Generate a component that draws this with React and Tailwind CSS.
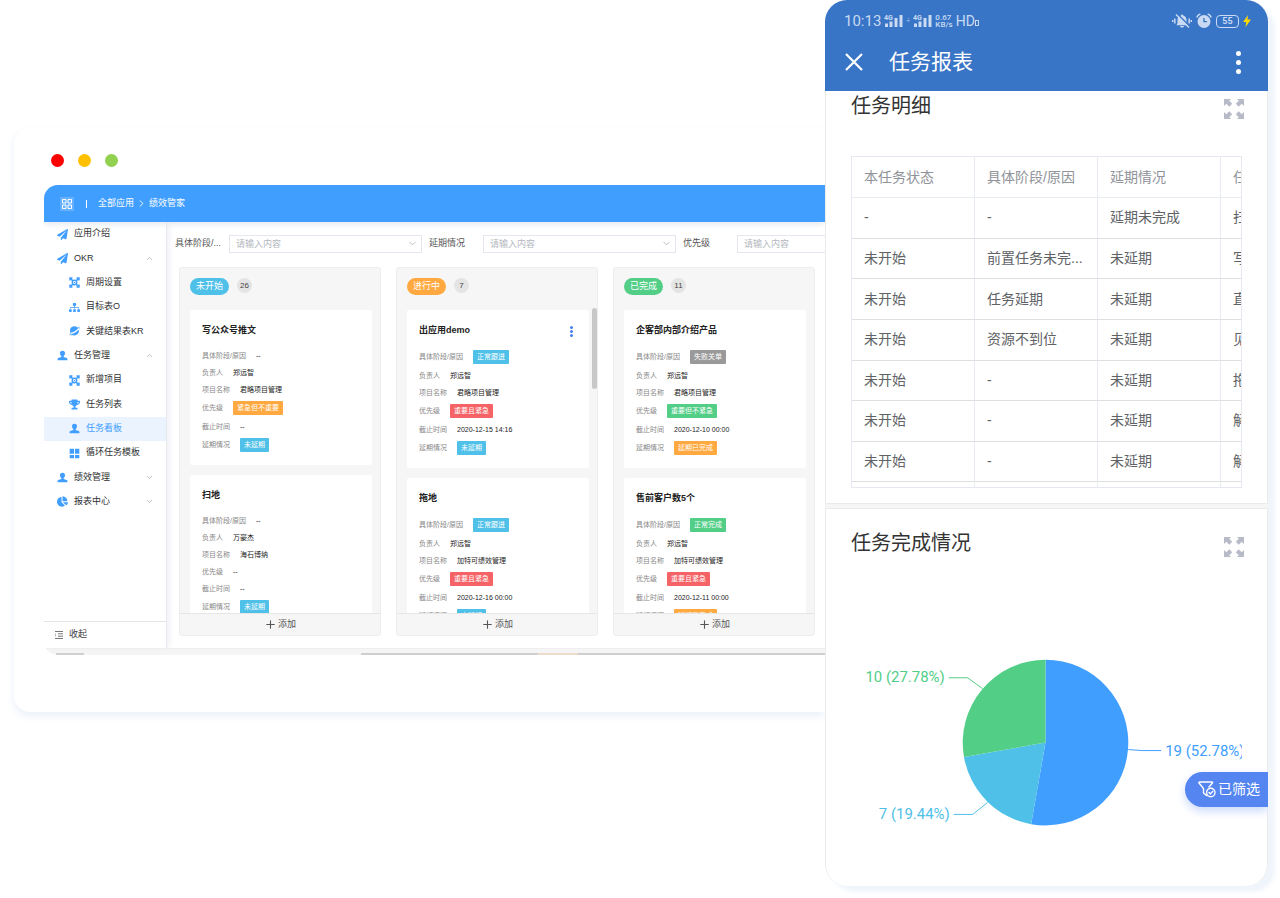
import { ChevronDown, ChevronRight, ChevronUp, Plus } from "lucide-react";
import { FaChartPie, FaPaperPlane, FaSitemap, FaTrophy } from "react-icons/fa";
import clsx from "clsx";

const PersonIcon = () => (
  <svg viewBox="0 0 16 16" className="size-[11px]" fill="currentColor">
    <path d="M8 1a3.6 3.6 0 0 1 3.6 3.8c0 1.8-.9 3.3-1.9 4.1v1.3l4.4 1.3c.7.2 1.1.8 1.1 1.5v2H.8v-2c0-.7.4-1.3 1.1-1.5l4.4-1.3V8.900C5.300 8.100 4.400 6.600 4.400 4.800A3.600 3.600 0 0 1 8 1z" />
  </svg>
);

const LinkIcon = () => (
  <svg viewBox="0 0 16 16" className="size-[11px]" fill="none" stroke="currentColor" strokeWidth="2.200">
    <path d="M1.500 5V1.500H5M11 1.500h3.500V5M14.500 11v3.500H11M5 14.500H1.500V11M2 2l3.500 3.500M14 2l-3.500 3.500M14 14l-3.500-3.500M2 14l3.500-3.500" />
    <circle cx="8" cy="8" r="3.200" />
    <circle cx="8" cy="8" r="1" fill="currentColor" stroke="none" />
  </svg>
);

const PlanetIcon = () => (
  <svg viewBox="0 0 16 16" className="size-3" fill="currentColor">
    <path d="M1.500 8.500A6.500 6.500 0 0 1 13.300 4C10.500 7.500 6.500 10 2 10.600 1.600 10 1.500 9.200 1.500 8.500z" />
    <path d="M3 12.200c4.300-.6 8-2.800 11-6.400A6.500 6.500 0 0 1 3 12.200z" />
    <path d="M12.500 2.800c2-.6 3 .1 2.300 1.900M2.700 10.700C.9 12.900.8 14.300 4.500 13.300" fill="none" stroke="currentColor" strokeWidth="1.200" />
  </svg>
);

const BlocksIcon = () => (
  <svg viewBox="0 0 16 16" className="size-[11px]" fill="currentColor">
    <path d="M1 1h6.300v7.500H1zM8.700 1H15v7.500H8.700zM1 10h6.300v5H1zM8.700 10H15v5H8.700z" />
  </svg>
);

const ExpandIcon = () => (
  <svg viewBox="0 0 20 20" className="size-5" fill="#b7bac7">
    <path d="M0 0h7L5.200 1.800l3 3-2.900 2.900-3-3L0 7zM20 0h-7l1.800 1.800-3 3 2.900 2.900 3-3L20 7zM0 20h7l-1.800-1.800 3-3-2.900-2.900-3 3L0 13zM20 20h-7l1.800-1.800-3-3 2.900-2.900 3 3L20 13z" />
  </svg>
);

const SignalIcon = () => (
  <svg viewBox="0 0 19 14" className="h-[14px] w-[19px]" fill="currentColor">
    <text x="0" y="6" fontSize="7" fontWeight="700" fontFamily="Roboto, sans-serif">4G</text>
    <path d="M1 9.500h3V13H1zM5.500 7.500h3V13h-3zM10.500 4h3v9h-3zM15.500 1h3v12h-3z" />
  </svg>
);

const MuteIcon = () => (
  <svg viewBox="0 0 20 16" className="h-4 w-5" fill="currentColor">
    <path d="M5.500 6.500A4.500 4.500 0 0 1 9 2.600c.3-1.500 2-1.500 2.300 0C13.500 3.400 14.500 5 14.500 7v3l1.500 2.200H4.500L5.500 10z" />
    <path d="M8 13h4c-.3 2-3.700 2-4 0z" />
    <path d="M5.500 1l13 13" stroke="#3875c6" strokeWidth="1.500" />
    <path d="M4 1.500l13 13M2.800 5.500v5M17.200 5.500v5M.7 7v2M19.300 7v2" stroke="currentColor" strokeWidth="1.500" />
  </svg>
);

const AlarmIcon = () => (
  <svg viewBox="0 0 16 16" className="size-4" fill="currentColor">
    <path d="M8 2a6.500 6.500 0 1 0 0 13A6.500 6.500 0 0 0 8 2zm.6 7.200H7.300V5h1.300v3l2.300.1v1.100z" fillRule="evenodd" />
    <path d="M.8 4.500C1.300 2.800 2.600 1.500 4.300 1M15.200 4.500C14.700 2.800 13.400 1.500 11.700 1" fill="none" stroke="currentColor" strokeWidth="1.600" />
  </svg>
);

const FilterIcon = () => (
  <svg viewBox="0 0 18 17" className="h-[17px] w-[18px]" fill="none" stroke="white" strokeWidth="1.400" strokeLinejoin="round" strokeLinecap="round">
    <path d="M8.500 14.500L5.500 12V7.500L1 2c-.3-.6 0-1 .6-1h12.300c.7 0 .9.500.5 1L11 6" />
    <circle cx="12.800" cy="11.500" r="4.200" />
    <path d="M11 11.500l1.400 1.400 2.400-2.600" />
  </svg>
);

const menu = [
  { label: "应用介绍", icon: FaPaperPlane },
  { label: "OKR", icon: FaPaperPlane, open: true },
  { label: "周期设置", icon: LinkIcon, child: true },
  { label: "目标表O", icon: FaSitemap, child: true },
  { label: "关键结果表KR", icon: PlanetIcon, child: true },
  { label: "任务管理", icon: PersonIcon, open: true },
  { label: "新增项目", icon: LinkIcon, child: true },
  { label: "任务列表", icon: FaTrophy, child: true },
  { label: "任务看板", icon: PersonIcon, child: true, active: true },
  { label: "循环任务模板", icon: BlocksIcon, child: true },
  { label: "绩效管理", icon: PersonIcon, open: false },
  { label: "报表中心", icon: FaChartPie, open: false },
];

const filters = ["具体阶段/...", "延期情况", "优先级"];

const tagColors = {
  blue: "bg-[#4fc0e8]",
  orange: "bg-[#ffa940]",
  red: "bg-[#f56367]",
  green: "bg-[#52ce87]",
  gray: "bg-[#999999]",
};

const makeTask = (title, stage, owner, project, priority, deadline, delay) => ({
  title,
  fields: [
    ["具体阶段/原因", ...stage],
    ["负责人", owner],
    ["项目名称", project],
    ["优先级", ...priority],
    ["截止时间", deadline],
    ["延期情况", ...delay],
  ],
});

const columns = [
  {
    name: "未开始",
    count: 26,
    color: "blue",
    tasks: [
      makeTask("写公众号推文", ["--"], "郑远智", "君略项目管理", ["紧急但不重要", "orange"], "--", ["未延期", "blue"]),
      makeTask("扫地", ["--"], "万豪杰", "海石博纳", ["--"], "--", ["未延期", "blue"]),
    ],
  },
  {
    name: "进行中",
    count: 7,
    color: "orange",
    scroll: true,
    tasks: [
      makeTask("出应用demo", ["正常跟进", "blue"], "郑远智", "君略项目管理", ["重要且紧急", "red"], "2020-12-15 14:16", ["未延期", "blue"]),
      makeTask("拖地", ["正常跟进", "blue"], "郑远智", "加特可绩效管理", ["重要且紧急", "red"], "2020-12-16 00:00", ["未延期", "blue"]),
    ],
  },
  {
    name: "已完成",
    count: 11,
    color: "green",
    tasks: [
      makeTask("企客部内部介绍产品", ["失败关单", "gray"], "郑远智", "君略项目管理", ["重要但不紧急", "green"], "2020-12-10 00:00", ["延期已完成", "orange"]),
      makeTask("售前客户数5个", ["正常完成", "green"], "郑远智", "加特可绩效管理", ["重要且紧急", "red"], "2020-12-11 00:00", ["延期已完成", "orange"]),
    ],
  },
];

const reportHead = ["本任务状态", "具体阶段/原因", "延期情况", "任务名称"];
const reportRows = [
  ["-", "-", "延期未完成", "扫地"],
  ["未开始", "前置任务未完...", "未延期", "写公众号推文"],
  ["未开始", "任务延期", "未延期", "直播"],
  ["未开始", "资源不到位", "未延期", "见客户"],
  ["未开始", "-", "未延期", "拖地"],
  ["未开始", "-", "未延期", "解决问题"],
  ["未开始", "-", "未延期", "解决问题"],
  ["", "", "", ""],
];

const slices = [
  { value: 19, text: "19 (52.78%)", color: "#409eff", x: 315, y: 165, anchor: "start", line: "278,159 292,160 311,160" },
  { value: 7, text: "7 (19.44%)", color: "#4fc0e8", x: 99, y: 229, anchor: "end", line: "137,212 122,224 103,224" },
  { value: 10, text: "10 (27.78%)", color: "#52ce87", x: 94, y: 91, anchor: "end", line: "132,98 117,87 98,87" },
];

function TopBar() {
  return (
    <header className="relative z-10 flex h-[37px] items-center bg-[#409eff] pl-4 text-[9px] text-white shadow-[0_2px_6px_#e4e7ed]">
      <button type="button" aria-label="应用" className="flex size-[14px] items-center justify-center bg-white/20">
        <svg viewBox="0 0 10 10" className="size-[10px]" fill="none" stroke="white" strokeWidth="1">
          <path d="M.5.5h3.500v3.500H.5zM6 .5h3.500v3.500H6zM.5 6h3.500v3.500H.5zM6 6h3.500v3.500H6z" />
        </svg>
      </button>
      <span className="ml-3 h-2 w-px bg-white" />
      <nav className="ml-[11px] flex items-center gap-[2px]">
        <a href="#apps">全部应用</a>
        <ChevronRight size={11} />
        <a href="#performance">绩效管家</a>
      </nav>
    </header>
  );
}

function Sidebar() {
  return (
    <aside className="relative flex w-[123px] shrink-0 flex-col border-r border-[#e6e8ee] bg-white shadow-[2px_0_6px_#eef0f4]">
      <ul className="grid h-[292px] auto-rows-fr">
        {menu.map(({ label, icon: Icon, child, active, open }) => (
          <li key={label} className={clsx(active && "bg-[#ebf3ff]")}>
            <a
              href="#menu"
              className={clsx("flex h-full items-center gap-[6px] pr-3 text-[9px]", child ? "pl-[25px]" : "pl-[13px]", active ? "text-[#409eff]" : "text-[#303133]")}
            >
              <span className="flex w-[11px] justify-center text-[11px] text-[#409eff]">
                <Icon />
              </span>
              {label}
              {open === true && <ChevronUp size={9} className="ml-auto text-[#a8abb2]" />}
              {open === false && <ChevronDown size={9} className="ml-auto text-[#a8abb2]" />}
            </a>
          </li>
        ))}
      </ul>
      <button type="button" className="mt-auto flex h-[27px] items-center gap-[6px] border-t border-[#e4e4e4] pl-[11px] text-[9px] text-[#444]">
        <svg viewBox="0 0 8 8" className="size-2" stroke="#777" strokeWidth="1">
          <path d="M0 .5h8M3 2.800h5M3 5.200h5M0 7.500h8M0 2.500v3" />
        </svg>
        收起
      </button>
    </aside>
  );
}

function Filters() {
  return (
    <div className="flex h-[18px] gap-[7px] overflow-hidden pl-2">
      {filters.map((name, i) => (
        <div key={name} className="flex shrink-0 items-center">
          <label htmlFor={`filter-${i}`} className="w-[54px] text-[9px] text-[#555]">
            {name}
          </label>
          <div className="relative h-[18px] w-[193px]">
            <select
              id={`filter-${i}`}
              className="block h-[18px] w-full appearance-none border border-[#e4e7ed] bg-white pl-[6px] text-[9px] leading-4 text-[#b4b8c0]"
            >
              <option>请输入内容</option>
            </select>
            <ChevronDown size={11} className="pointer-events-none absolute top-[3px] right-1 text-[#b4b8c0]" />
          </div>
        </div>
      ))}
    </div>
  );
}

function TaskCard({ task, showMore }) {
  return (
    <article className="relative shrink-0 rounded-[2px] bg-white pb-[10px] pl-3">
      <h3 className="h-[37px] pt-[13px] text-[9px] leading-[14px] font-bold text-[#222]">{task.title}</h3>
      {showMore && (
        <button type="button" aria-label="更多" className="absolute top-4 right-4 flex flex-col gap-px">
          <span className="size-[3px] rounded-full bg-[#4a80f0]" />
          <span className="size-[3px] rounded-full bg-[#4a80f0]" />
          <span className="size-[3px] rounded-full bg-[#4a80f0]" />
        </button>
      )}
      <dl>
        {task.fields.map(([label, value, color]) => (
          <div key={label} className={clsx("flex items-center gap-[10px] text-[7px] leading-[10px]", color ? "h-5" : "h-[17px]")}>
            <dt className="text-[#888]">{label}</dt>
            <dd className={clsx(color ? "rounded-[1px] px-1 py-[2px] text-white" : "text-[#222]", color && tagColors[color])}>{value}</dd>
          </div>
        ))}
      </dl>
    </article>
  );
}

function Column({ column }) {
  return (
    <section className="relative flex h-[369px] min-w-0 flex-1 flex-col overflow-hidden rounded-[3px] border border-[#eeeeee] bg-[#f6f6f6]">
      <div className="flex h-[42px] shrink-0 items-start gap-2 pt-[10px] pl-[10px]">
        <h2 className={clsx("flex h-[17px] items-center rounded-full px-[6px] text-[9px] text-white", tagColors[column.color])}>{column.name}</h2>
        <span className="flex size-[15px] items-center justify-center rounded-full bg-[#e4e4e4] text-[8px] text-[#444]">{column.count}</span>
      </div>
      <div className="flex min-h-0 flex-1 flex-col gap-[10px] overflow-hidden pr-2 pl-[10px]">
        {column.tasks.map((task, i) => (
          <TaskCard key={task.title} task={task} showMore={column.scroll && i === 0} />
        ))}
      </div>
      {column.scroll && <div className="absolute top-10 right-0 h-[81px] w-[5px] rounded-full bg-[#c8c8c8]" />}
      <button type="button" className="flex h-[22px] shrink-0 items-center justify-center gap-px border-t border-[#e6e6e6] text-[9px] text-[#555]">
        <Plus size={13} strokeWidth={2} />
        添加
      </button>
    </section>
  );
}

function BrowserWindow() {
  return (
    <div className="mt-32 min-w-0 flex-1 rounded-l-2xl bg-white pt-[26px] pb-[57px] pl-[30px] shadow-[0_4px_10px_#e9f0fa]">
      <div className="flex gap-[14px] pl-[7px]">
        <span className="size-[13px] rounded-full bg-[#ff0000]" />
        <span className="size-[13px] rounded-full bg-[#ffc000]" />
        <span className="size-[13px] rounded-full bg-[#92d050]" />
      </div>
      <div className="mt-[18px] overflow-hidden rounded-l-[14px]">
        <TopBar />
        <div className="flex">
          <Sidebar />
          <main className="min-w-0 flex-1 pt-[13px] pb-3">
            <Filters />
            <div className="mt-[14px] flex gap-[15px] pr-[10px] pl-3">
              {columns.map((column) => (
                <Column key={column.name} column={column} />
              ))}
            </div>
          </main>
        </div>
        <div className="flex h-[7px] items-end border-t border-[#eee] bg-[#f5f5f5] pl-3">
          <span className="h-[2px] w-7 bg-[#cfcfcf]" />
          <span className="ml-auto h-[2px] w-[177px] bg-[#cfcfcf]" />
          <span className="h-[2px] w-10 bg-[#ecdccb]" />
          <span className="h-[2px] w-[247px] bg-[#cfcfcf]" />
        </div>
      </div>
    </div>
  );
}

function StatusBar() {
  return (
    <div className="flex h-[42px] items-center justify-between pr-[17px] pl-[19px] text-[#c9daf2]">
      <div className="flex items-center gap-[3px] font-[Roboto,'Noto_Sans_CJK_SC',sans-serif] text-[15px]">
        <span>10:13</span>
        <SignalIcon />
        <span className="text-[7px]">÷</span>
        <SignalIcon />
        <span className="text-[8px] leading-[7px] font-medium">
          0.67
          <br />
          KB/s
        </span>
        <span className="flex items-center text-[14px]">
          HD
          <span className="mt-1 h-[6px] w-1 border border-current" />
        </span>
      </div>
      <div className="flex items-center gap-1">
        <MuteIcon />
        <AlarmIcon />
        <span className="flex h-[13px] w-[23px] items-center justify-center rounded-[4px] border border-current font-[Roboto,sans-serif] text-[9px] leading-[11px] font-bold">
          55
        </span>
        <svg viewBox="0 0 8 12" className="h-3 w-2" fill="#ffd800">
          <path d="M5 0L0 7h3.200L2.500 12 8 4.600H4.500z" />
        </svg>
      </div>
    </div>
  );
}

function PieChart() {
  const total = slices.reduce((sum, s) => sum + s.value, 0);
  const cx = 195;
  const cy = 152;
  const r = 83;
  let start = 0;

  return (
    <svg viewBox="0 0 392 260" className="w-full overflow-hidden" role="img" aria-label="任务完成情况">
      {slices.map((slice) => {
        const end = start + (slice.value / total) * Math.PI * 2;
        const large = end - start > Math.PI ? 1 : 0;
        const d = `M${cx} ${cy}L${cx + r * Math.sin(start)} ${cy - r * Math.cos(start)}A${r} ${r} 0 ${large} 1 ${cx + r * Math.sin(end)} ${cy - r * Math.cos(end)}Z`;
        start = end;
        return (
          <g key={slice.text}>
            <path d={d} fill={slice.color} />
            <polyline points={slice.line} fill="none" stroke={slice.color} />
            <text x={slice.x} y={slice.y} textAnchor={slice.anchor} fill={slice.color} fontSize="15" fontFamily="Roboto, sans-serif">
              {slice.text}
            </text>
          </g>
        );
      })}
    </svg>
  );
}

function Phone() {
  return (
    <div className="relative z-10 w-[443px] shrink-0 overflow-hidden rounded-[22px] bg-[#f5f5f5] shadow-[7px_6px_5px_#f0f5fc]">
      <header className="h-[91px] bg-[#3875c6]">
        <StatusBar />
        <div className="flex h-10 items-center pr-[27px] pl-5 text-white">
          <button type="button" aria-label="关闭">
            <svg viewBox="0 0 18 18" className="size-[18px]" stroke="white" strokeWidth="2.200">
              <path d="M1 1l16 16M17 1L1 17" />
            </svg>
          </button>
          <h1 className="ml-[26px] text-[21px]">任务报表</h1>
          <button type="button" aria-label="菜单" className="ml-auto flex flex-col gap-1">
            <span className="size-[5px] rounded-full bg-white" />
            <span className="size-[5px] rounded-full bg-white" />
            <span className="size-[5px] rounded-full bg-white" />
          </button>
        </div>
      </header>

      <section className="border-x border-b border-[#ebebeb] bg-white px-[25px] pb-[15px]">
        <div className="-mr-[2px] flex h-[65px] items-start justify-between">
          <h2 className="text-[20px] leading-[30px] text-[#333]">任务明细</h2>
          <button type="button" aria-label="展开任务明细" className="mt-2">
            <ExpandIcon />
          </button>
        </div>
        <div className="h-[332px] overflow-hidden border border-[#e6e9f2]">
          <table className="h-[366px] w-[492px] table-fixed border-separate border-spacing-0 text-left text-[14px] text-[#606266]">
            <thead>
              <tr>
                {reportHead.map((name) => (
                  <th key={name} className="h-[41px] border-r border-b border-[#e9ebf3] px-3 font-normal whitespace-nowrap text-[#909399]">
                    {name}
                  </th>
                ))}
              </tr>
            </thead>
            <tbody>
              {reportRows.map((row, i) => (
                <tr key={i}>
                  {row.map((cell, j) => (
                    <td key={j} className="h-10 border-r border-b border-r-[#e9ebf3] border-b-[#dfdfe1] px-3 whitespace-nowrap">
                      {cell}
                    </td>
                  ))}
                </tr>
              ))}
            </tbody>
          </table>
        </div>
      </section>

      <section className="mt-1 rounded-b-[22px] border border-b-0 border-[#ebebeb] bg-white px-[25px] pb-9">
        <div className="-mr-[2px] flex h-[82px] items-start justify-between pt-[19px]">
          <h2 className="text-[20px] leading-[30px] text-[#333]">任务完成情况</h2>
          <button type="button" aria-label="展开任务完成情况" className="mt-[9px]">
            <ExpandIcon />
          </button>
        </div>
        <PieChart />
      </section>

      <button
        type="button"
        className="absolute right-0 bottom-[79px] flex h-[35px] items-center gap-[2px] rounded-l-full bg-[#5485f0] pr-2 pl-[13px] text-[14px] text-white shadow-[0_4px_10px_#c9d8fb]"
      >
        <FilterIcon />
        已筛选
      </button>
    </div>
  );
}

export default function App() {
  return (
    <div lang="zh-CN" className="flex items-start bg-white pr-3 pb-3 pl-[14px] font-['Liberation_Sans','Noto_Sans_CJK_SC',sans-serif]">
      <BrowserWindow />
      <Phone />
    </div>
  );
}
